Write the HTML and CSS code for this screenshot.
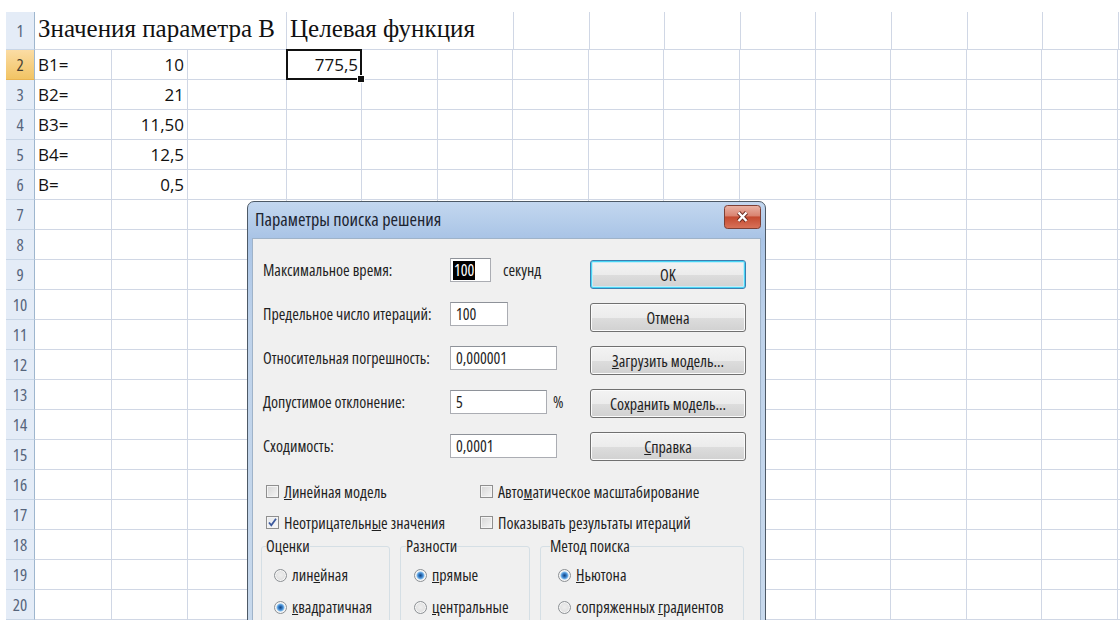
FILE: index.html
```html
<!DOCTYPE html>
<html lang="ru">
<head>
<meta charset="utf-8">
<title>Поиск решения</title>
<link rel="stylesheet" href="styles.css">
</head>
<body>
<div class="sheet">
  <div class="row r1">
    <div class="rh">1</div>
    <div class="c t-left"><span class="serif">Значения параметра В</span></div>
    <div class="c t-right"><span class="serif">Целевая функция</span></div>
    <div class="rest r1-rest"></div>
  </div>
  <div class="row">
    <div class="rh sel">2</div>
    <div class="c ca">B1=</div><div class="c cb">10</div><div class="c cc"></div><div class="c cd active">775,5</div><div class="rest"></div>
  </div>
  <div class="row">
    <div class="rh">3</div>
    <div class="c ca">B2=</div><div class="c cb">21</div><div class="c cc"></div><div class="c cd"></div><div class="rest"></div>
  </div>
  <div class="row">
    <div class="rh">4</div>
    <div class="c ca">B3=</div><div class="c cb">11,50</div><div class="c cc"></div><div class="c cd"></div><div class="rest"></div>
  </div>
  <div class="row">
    <div class="rh">5</div>
    <div class="c ca">B4=</div><div class="c cb">12,5</div><div class="c cc"></div><div class="c cd"></div><div class="rest"></div>
  </div>
  <div class="row">
    <div class="rh">6</div>
    <div class="c ca">B=</div><div class="c cb">0,5</div><div class="c cc"></div><div class="c cd"></div><div class="rest"></div>
  </div>
  <div class="row"><div class="rh">7</div><div class="c ca"></div><div class="c cb"></div><div class="c cc"></div><div class="c cd"></div><div class="rest"></div></div>
  <div class="row"><div class="rh">8</div><div class="c ca"></div><div class="c cb"></div><div class="c cc"></div><div class="c cd"></div><div class="rest"></div></div>
  <div class="row"><div class="rh">9</div><div class="c ca"></div><div class="c cb"></div><div class="c cc"></div><div class="c cd"></div><div class="rest"></div></div>
  <div class="row"><div class="rh">10</div><div class="c ca"></div><div class="c cb"></div><div class="c cc"></div><div class="c cd"></div><div class="rest"></div></div>
  <div class="row"><div class="rh">11</div><div class="c ca"></div><div class="c cb"></div><div class="c cc"></div><div class="c cd"></div><div class="rest"></div></div>
  <div class="row"><div class="rh">12</div><div class="c ca"></div><div class="c cb"></div><div class="c cc"></div><div class="c cd"></div><div class="rest"></div></div>
  <div class="row"><div class="rh">13</div><div class="c ca"></div><div class="c cb"></div><div class="c cc"></div><div class="c cd"></div><div class="rest"></div></div>
  <div class="row"><div class="rh">14</div><div class="c ca"></div><div class="c cb"></div><div class="c cc"></div><div class="c cd"></div><div class="rest"></div></div>
  <div class="row"><div class="rh">15</div><div class="c ca"></div><div class="c cb"></div><div class="c cc"></div><div class="c cd"></div><div class="rest"></div></div>
  <div class="row"><div class="rh">16</div><div class="c ca"></div><div class="c cb"></div><div class="c cc"></div><div class="c cd"></div><div class="rest"></div></div>
  <div class="row"><div class="rh">17</div><div class="c ca"></div><div class="c cb"></div><div class="c cc"></div><div class="c cd"></div><div class="rest"></div></div>
  <div class="row"><div class="rh">18</div><div class="c ca"></div><div class="c cb"></div><div class="c cc"></div><div class="c cd"></div><div class="rest"></div></div>
  <div class="row"><div class="rh">19</div><div class="c ca"></div><div class="c cb"></div><div class="c cc"></div><div class="c cd"></div><div class="rest"></div></div>
  <div class="row"><div class="rh">20</div><div class="c ca"></div><div class="c cb"></div><div class="c cc"></div><div class="c cd"></div><div class="rest"></div></div>
</div>

<div class="dialog">
  <div class="dlg-title">
    <span class="dlg-caption">Параметры поиска решения</span>
    <span class="close">
      <svg width="37" height="24" viewBox="0 0 37 24">
        <defs>
          <linearGradient id="closeFill" x1="0" y1="0" x2="0" y2="1">
            <stop offset="0" stop-color="#eab3a5"/>
            <stop offset="0.45" stop-color="#d98370"/>
            <stop offset="0.5" stop-color="#c44a30"/>
            <stop offset="1" stop-color="#d9735a"/>
          </linearGradient>
        </defs>
        <rect x="0.5" y="0.5" width="36" height="23" rx="3" fill="url(#closeFill)" stroke="#7d4036"/>
        <path d="M14.5 7.5 L22.5 16 M22.5 7.5 L14.5 16" stroke="#6b2b20" stroke-width="4.2"/>
        <path d="M14.5 7.5 L22.5 16 M22.5 7.5 L14.5 16" stroke="#fff" stroke-width="2.4"/>
      </svg>
    </span>
  </div>
  <div class="dlg-body">
    <div class="top">
      <div class="form">
        <div class="frow"><span class="lbl">Максимальное время:</span><span class="inp w1"><span class="hl">100</span></span><span class="unit">секунд</span></div>
        <div class="frow"><span class="lbl">Предельное число итераций:</span><span class="inp w2">100</span></div>
        <div class="frow"><span class="lbl">Относительная погрешность:</span><span class="inp w3">0,000001</span></div>
        <div class="frow"><span class="lbl">Допустимое отклонение:</span><span class="inp w4">5</span><span class="pct">%</span></div>
        <div class="frow"><span class="lbl">Сходимость:</span><span class="inp w3">0,0001</span></div>
      </div>
      <div class="buttons">
        <span class="btn default">OK</span>
        <span class="btn">Отмена</span>
        <span class="btn"><u>З</u>агрузить модель...</span>
        <span class="btn">Сохр<u>а</u>нить модель...</span>
        <span class="btn"><u>С</u>правка</span>
      </div>
    </div>
    <div class="checks">
      <div class="chk"><span class="box"></span><span><u>Л</u>инейная модель</span></div>
      <div class="chk"><span class="box"></span><span>Авто<u>м</u>атическое масштабирование</span></div>
      <div class="chk"><span class="box on"><svg width="11" height="11" viewBox="0 0 11 11"><path d="M2 5.5 L4.3 8.3 L9 1.8" fill="none" stroke="#3d5a9e" stroke-width="1.8"/></svg></span><span>Неотрицательн<u>ы</u>е значения</span></div>
      <div class="chk"><span class="box"></span><span>Показывать <u>р</u>езультаты итераций</span></div>
    </div>
    <div class="groups">
      <fieldset class="grp g1">
        <legend>Оценки</legend>
        <div class="rad"><span class="radio"></span><span>лин<u>е</u>йная</span></div>
        <div class="rad"><span class="radio on"></span><span><u>к</u>вадратичная</span></div>
      </fieldset>
      <fieldset class="grp g2">
        <legend>Разности</legend>
        <div class="rad"><span class="radio on"></span><span><u>п</u>рямые</span></div>
        <div class="rad"><span class="radio"></span><span><u>ц</u>ентральные</span></div>
      </fieldset>
      <fieldset class="grp g3">
        <legend>Метод поиска</legend>
        <div class="rad"><span class="radio on"></span><span><u>Н</u>ьютона</span></div>
        <div class="rad"><span class="radio"></span><span>сопряженных <u>г</u>радиентов</span></div>
      </fieldset>
    </div>
  </div>
</div>
</body>
</html>
```

FILE: styles.css
```css
* { box-sizing: border-box; }

html, body {
  margin: 0;
  padding: 0;
}

body {
  position: relative;
  width: 1120px;
  height: 620px;
  overflow: hidden;
  background: #fff;
  font-family: "Open Sans", "Noto Sans", sans-serif;
  color: #111;
}

/* ---------- worksheet ---------- */
.sheet {
  padding: 12px 0 0 6px;
}

.row {
  display: flex;
  height: 30px;
}

.row.r1 { height: 38px; }

.rh {
  flex: none;
  width: 29px;
  display: flex;
  align-items: center;
  justify-content: center;
  background: #e4ecf7;
  border-right: 1px solid #9eb6ce;
  border-bottom: 1px solid #c9d6e6;
  color: #56657c;
  font-size: 17px;
  font-stretch: 75%;
}

.rh.sel {
  background: linear-gradient(#fbdca4, #f2c464);
  border-bottom-color: #e9b452;
  color: #4a4030;
}

.c {
  flex: none;
  display: flex;
  align-items: center;
  padding: 0 3px;
  border-right: 1px solid #d0d7e5;
  border-bottom: 1px solid #d0d7e5;
  font-size: 17px;
  white-space: nowrap;
}

.ca { width: 77px; }
.cb { width: 76px; justify-content: flex-end; }
.cc { width: 99px; }
.cd { width: 75px; justify-content: flex-end; }

.t-left { width: 252px; align-items: flex-start; padding: 3px 0 0 3px; }
.t-right { width: 226.6px; align-items: flex-start; padding: 3px 0 0 3px; border-right: 1px solid #d0d7e5; }

.serif {
  font-family: "Liberation Serif", "Times New Roman", serif;
  font-size: 25px;
  color: #111;
}

.rest {
  flex: 1;
  border-bottom: 1px solid #d0d7e5;
  background-image: repeating-linear-gradient(to right, transparent 0 74.6px, #d0d7e5 74.6px 75.6px);
}

.active { position: relative; }

.active::after {
  content: "";
  position: absolute;
  left: -1px;
  top: -1px;
  right: -1px;
  bottom: -1px;
  border: 2px solid #111;
}

.active::before {
  content: "";
  position: absolute;
  right: -4px;
  bottom: -4px;
  width: 6px;
  height: 6px;
  background: #111;
  border: 1px solid #fff;
  z-index: 1;
}

/* ---------- solver dialog ---------- */
.dialog {
  position: absolute;
  left: 247px;
  top: 201px;
  width: 519px;
  height: 440px;
  border: 1px solid #4d5966;
  border-radius: 7px 7px 0 0;
  background: linear-gradient(#c3d7ef, #a9c4e6 36px, #bed2ea 120px, #c8d9ec);
  font-family: "Open Sans", "Noto Sans", sans-serif;
  font-size: 16px;
  font-stretch: 75%;
  color: #1f1f1f;
  padding: 0 4px;
}

.dlg-title {
  height: 36px;
  display: flex;
  align-items: center;
  justify-content: space-between;
  padding: 0 0 2px 3px;
}

.dlg-caption {
  font-size: 18.2px;
  color: #1c2430;
}

.close {
  display: flex;
  margin-top: -4px;
}

.dlg-body {
  height: 400px;
  background: #f0f0f0;
  border: 1px solid #9fb3c9;
  padding: 9px 0 0 10px;
}

.top {
  display: flex;
}

.form {
  width: 327px;
}

.frow {
  height: 44px;
  display: flex;
  align-items: center;
}

.lbl {
  width: 187px;
  flex: none;
  white-space: nowrap;
}

.inp {
  height: 24px;
  display: flex;
  align-items: center;
  padding: 0 5px;
  background: #fff;
  border: 1px solid #abadb3;
  border-top-color: #8e9299;
}

.w1 { width: 41px; padding-left: 2px; }
.w2 { width: 58px; }
.w3 { width: 107px; }
.w4 { width: 97px; }

.hl {
  background: #000;
  color: #fff;
  padding: 0 1px;
  line-height: 19px;
}

.unit { margin-left: 12px; }
.pct { margin-left: 6px; }

.buttons {
  display: flex;
  flex-direction: column;
  gap: 14px;
  padding-top: 12px;
}

.btn {
  width: 156px;
  height: 29px;
  display: flex;
  align-items: center;
  justify-content: center;
  border: 1px solid #707070;
  border-radius: 3px;
  background: linear-gradient(#f3f3f3, #ececec 50%, #dddddd 51%, #d1d1d1);
  box-shadow: inset 0 0 0 1px #fbfbfb;
}

.btn.default {
  border-color: #3c7fb1;
  box-shadow: inset 0 0 0 1px #48d5f5, inset 0 0 0 2px #c4ecf7;
}

/* check boxes */
.checks {
  display: grid;
  grid-template-columns: 214px 1fr;
  margin-top: 8px;
  padding-left: 3px;
}

.chk {
  height: 31px;
  display: flex;
  align-items: center;
  gap: 5px;
  white-space: nowrap;
}

.box {
  width: 13px;
  height: 13px;
  flex: none;
  display: flex;
  align-items: center;
  justify-content: center;
  border: 1px solid #8f8f8f;
  background: linear-gradient(135deg, #d6d6d6, #f6f6f6);
  box-shadow: inset 0 0 0 1px #f4f4f4;
}

.box.on { background: linear-gradient(135deg, #e4e7ec, #fafafa); }

/* option groups */
.groups {
  display: flex;
  gap: 10px;
  margin: -3px 0 0 -2px;
}

.grp {
  margin: 0;
  padding: 2px 0 0 12px;
  border: 1px solid #d5dfe5;
  border-radius: 3px;
  height: 100px;
}

.g1 { width: 129px; }
.g2 { width: 130px; padding-left: 13px; }
.g3 { width: 204px; padding-left: 17px; }

.grp legend {
  padding: 0;
  margin-left: -8px;
}

.rad {
  height: 32px;
  display: flex;
  align-items: center;
  gap: 5px;
  white-space: nowrap;
}

.radio {
  width: 13px;
  height: 13px;
  flex: none;
  border-radius: 50%;
  border: 1px solid #8c9094;
  background: radial-gradient(circle at 50% 45%, #eeeeee 0, #e2e2e2 55%, #cdcdcd 100%);
  box-shadow: inset 0 0 0 1px #f7f7f7;
}

.radio.on {
  background: radial-gradient(circle at 50% 50%, #17467d 0, #2f74bf 1.8px, #6fb0e8 3.3px, #bcd9f0 4px, #f4f4f4 4.6px, #dadada 100%);
}
```
